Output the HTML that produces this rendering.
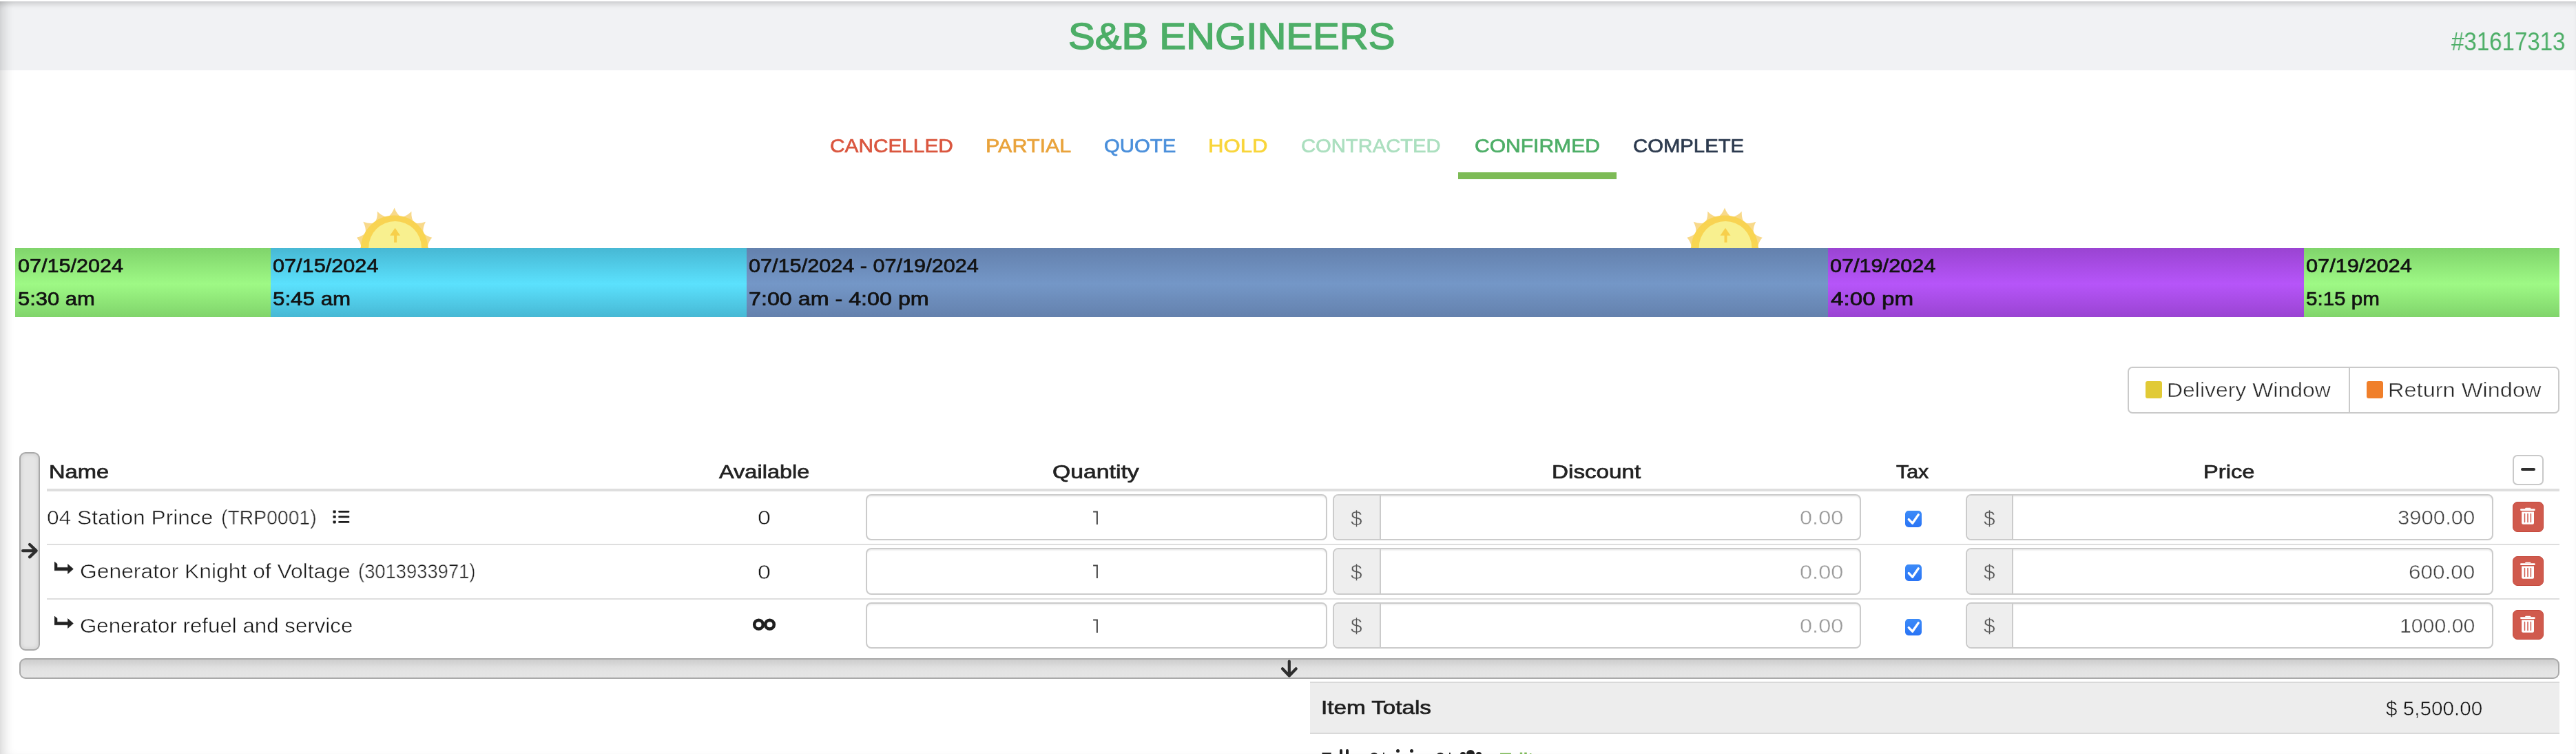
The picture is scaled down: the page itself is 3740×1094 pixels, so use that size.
<!DOCTYPE html>
<html><head><meta charset="utf-8"><title>S&amp;B Engineers</title><style>
*{margin:0;padding:0;box-sizing:border-box}
html,body{width:3740px;height:1094px;overflow:hidden;background:#fff;font-family:"Liberation Sans",sans-serif}
.a{position:absolute}
.t{position:absolute;white-space:pre;line-height:1;transform-origin:0 0;will-change:transform}
.shadowwrap{position:absolute;left:0;top:2px;width:3740px;height:1092px;pointer-events:none;
 box-shadow:inset 0 8px 10px -5px rgba(0,0,0,.19), inset 16px 0 16px -10px rgba(0,0,0,.15);z-index:50}
.hdr{position:absolute;left:0;top:2px;width:3740px;height:100px;background:#f1f2f4}
.seg{position:absolute;top:360px;height:100px}
.inp{position:absolute;border:2px solid #cbcbcb;border-radius:8px;background:#fff;box-shadow:inset 0 2px 2px rgba(0,0,0,.06)}
.grp{position:absolute;border:2px solid #cbcbcb;border-radius:8px;background:#fff;overflow:hidden;box-shadow:inset 0 2px 2px rgba(0,0,0,.06)}
.addon{position:absolute;left:0;top:0;bottom:0;background:#eeeeee;border-right:2px solid #cbcbcb}
.del{position:absolute;left:3648px;width:45px;height:43.5px;background:#d05a4d;border:1px solid #c5483b;border-radius:7px}
.cb{position:absolute;left:2766px;width:24px;height:24px;background:linear-gradient(#3c8bf8,#2a74f5);border-radius:5px}
.rowline{position:absolute;left:68px;width:3648px;height:2px;background:#dedede}
</style></head>
<body>
<div class="hdr"></div>
<div class="a" style="left:2117px;top:250px;width:230px;height:10px;background:#7dbb56"></div>
<svg class="a" style="left:0;top:0" width="3740" height="460"><defs><linearGradient id="sg" x1="0" y1="0" x2="0" y2="1"><stop offset="0" stop-color="#f8d252"/><stop offset="0.5" stop-color="#f9d752"/><stop offset="1" stop-color="#fde54d"/></linearGradient></defs><path d="M562.52,315.06 Q569.01,311.13 572.60,301.50 Q576.19,311.13 582.68,315.06 Q590.21,314.11 597.41,306.77 Q596.78,317.03 601.11,323.26 Q608.37,325.45 617.93,321.68 Q613.18,330.79 614.60,338.25 Q620.35,343.21 627.29,344.73 Q622.57,350.04 620.83,357.43 Q624.07,364.30 629.79,368.51 Q623.32,371.44 618.73,377.49 Q618.89,385.08 622.40,391.25 Q615.30,391.30 608.64,394.95 Q605.70,401.95 606.40,409.02 Q599.89,406.17 592.33,406.81 Q586.80,412.00 584.55,418.74 Q579.77,413.50 572.60,411.00 Q565.43,413.50 560.65,418.74 Q558.40,412.00 552.87,406.81 Q545.31,406.17 538.80,409.02 Q539.50,401.95 536.56,394.95 Q529.90,391.30 522.80,391.25 Q526.31,385.08 526.47,377.49 Q521.88,371.44 515.41,368.51 Q521.13,364.30 524.37,357.43 Q522.63,350.04 517.91,344.73 Q524.85,343.21 530.60,338.25 Q532.02,330.79 527.27,321.68 Q536.83,325.45 544.09,323.26 Q548.42,317.03 547.79,306.77 Q554.99,314.11 562.52,315.06 Z" fill="#f8d98a"/><circle cx="572.6" cy="361.2" r="48.8" fill="url(#sg)"/><circle cx="573.6" cy="359.5" r="38.4" fill="#f8f08f"/><path d="M566.1,341.7 L573.6,330.8 L581.1,341.7 L576.1,341.7 L576.1,351.7 L572.1,351.7 L572.1,341.7 Z" fill="#f7cf4b"/><path d="M2493.92,315.06 Q2500.41,311.13 2504.00,301.50 Q2507.59,311.13 2514.08,315.06 Q2521.61,314.11 2528.81,306.77 Q2528.18,317.03 2532.51,323.26 Q2539.77,325.45 2549.33,321.68 Q2544.58,330.79 2546.00,338.25 Q2551.75,343.21 2558.69,344.73 Q2553.97,350.04 2552.23,357.43 Q2555.47,364.30 2561.19,368.51 Q2554.72,371.44 2550.13,377.49 Q2550.29,385.08 2553.80,391.25 Q2546.70,391.30 2540.04,394.95 Q2537.10,401.95 2537.80,409.02 Q2531.29,406.17 2523.73,406.81 Q2518.20,412.00 2515.95,418.74 Q2511.17,413.50 2504.00,411.00 Q2496.83,413.50 2492.05,418.74 Q2489.80,412.00 2484.27,406.81 Q2476.71,406.17 2470.20,409.02 Q2470.90,401.95 2467.96,394.95 Q2461.30,391.30 2454.20,391.25 Q2457.71,385.08 2457.87,377.49 Q2453.28,371.44 2446.81,368.51 Q2452.53,364.30 2455.77,357.43 Q2454.03,350.04 2449.31,344.73 Q2456.25,343.21 2462.00,338.25 Q2463.42,330.79 2458.67,321.68 Q2468.23,325.45 2475.49,323.26 Q2479.82,317.03 2479.19,306.77 Q2486.39,314.11 2493.92,315.06 Z" fill="#f8d98a"/><circle cx="2504" cy="361.2" r="48.8" fill="url(#sg)"/><circle cx="2505" cy="359.5" r="38.4" fill="#f8f08f"/><path d="M2497.5,341.7 L2505,330.8 L2512.5,341.7 L2507.5,341.7 L2507.5,351.7 L2503.5,351.7 L2503.5,341.7 Z" fill="#f7cf4b"/></svg>
<div class="seg" style="left:22px;width:371px;background:linear-gradient(to bottom,#80d46b 0%,#9ef985 52%,#80d46b 100%)"></div>
<div class="seg" style="left:393px;width:691px;background:linear-gradient(to bottom,#47b8d4 0%,#5be1fd 52%,#47b8d4 100%)"></div>
<div class="seg" style="left:1084px;width:1570px;background:linear-gradient(to bottom,#6481ad 0%,#7497c7 52%,#6481ad 100%)"></div>
<div class="seg" style="left:2654px;width:691px;background:linear-gradient(to bottom,#9a44d2 0%,#b655f9 52%,#9a44d2 100%)"></div>
<div class="seg" style="left:3345px;width:371px;background:linear-gradient(to bottom,#80d46b 0%,#9ef985 52%,#80d46b 100%)"></div>
<div class="a" style="left:3089px;top:532px;width:627px;height:68px;border:2px solid #cacaca;border-radius:7px;background:#fff"></div>
<div class="a" style="left:3410px;top:533px;width:2px;height:66px;background:#cacaca"></div>
<div class="a" style="left:3114.5px;top:553.3px;width:24.5px;height:24.5px;background:#e1ca36;border-radius:3px"></div>
<div class="a" style="left:3435.7px;top:553.3px;width:24.5px;height:24.5px;background:#f07f2a;border-radius:3px"></div>
<div class="a" style="left:28px;top:656px;width:30px;height:288px;background:#e5e5e5;border:2px solid #a9a9a9;border-radius:9px;box-shadow:inset 0 0 6px rgba(0,0,0,.12)"></div>
<div class="a" style="left:28px;top:955px;width:3688px;height:30px;background:linear-gradient(to bottom,#cdcdcd 0%,#d6d6d6 22%,#e0e0e0 45%,#e4e4e4 70%,#e5e5e5 100%);border:2px solid #a9a9a9;border-radius:9px"></div>
<div class="a" style="left:68px;top:709px;width:3648px;height:4px;background:#dedede"></div>
<div class="a" style="left:3648px;top:660px;width:45px;height:44px;border:2px solid #c9c9c9;border-radius:7px;background:#fff"></div>
<div class="a" style="left:3659.5px;top:679px;width:21px;height:4px;background:#2e2e2e;border-radius:2px"></div>
<div class="inp" style="left:1257px;top:717.1px;width:670px;height:67.3px"></div>
<div class="grp" style="left:1935px;top:717.1px;width:767px;height:67.3px"><div class="addon" style="width:68px"></div></div>
<div class="grp" style="left:2854px;top:717.1px;width:766px;height:67.3px"><div class="addon" style="width:67px"></div></div>
<div class="cb" style="top:740.9px"></div>
<svg class="a" style="left:2766px;top:740.9px" width="24" height="24"><path d="M5.3,12.6 L10.6,18.2 L19.2,5.9" stroke="#fff" stroke-width="3.4" fill="none" stroke-linecap="round" stroke-linejoin="round"/></svg>
<div class="del" style="top:728.3px"></div>
<svg class="a" style="left:3648px;top:728.3px" width="45" height="44"><path d="M19.3,8.7 h5.9 a1.2,1.2 0 0 1 1.2,1.2 v0.4 h-8.3 v-0.4 a1.2,1.2 0 0 1 1.2,-1.2z" fill="#fff"/><rect x="11.1" y="10.2" width="21.5" height="2.9" rx="1" fill="#fff"/><path d="M13.1,14.6 h17.9 v16.1 a2,2 0 0 1 -2,2 h-13.9 a2,2 0 0 1 -2,-2z" fill="#fff"/><path d="M17.5,17.6 v11.9 M22,17.6 v11.9 M26.4,17.6 v11.9" stroke="#d05a4d" stroke-width="1.5" stroke-linecap="round"/></svg>
<div class="rowline" style="top:789.3px"></div>
<div class="inp" style="left:1257px;top:795.4px;width:670px;height:67.3px"></div>
<div class="grp" style="left:1935px;top:795.4px;width:767px;height:67.3px"><div class="addon" style="width:68px"></div></div>
<div class="grp" style="left:2854px;top:795.4px;width:766px;height:67.3px"><div class="addon" style="width:67px"></div></div>
<div class="cb" style="top:819.2px"></div>
<svg class="a" style="left:2766px;top:819.2px" width="24" height="24"><path d="M5.3,12.6 L10.6,18.2 L19.2,5.9" stroke="#fff" stroke-width="3.4" fill="none" stroke-linecap="round" stroke-linejoin="round"/></svg>
<div class="del" style="top:806.6px"></div>
<svg class="a" style="left:3648px;top:806.6px" width="45" height="44"><path d="M19.3,8.7 h5.9 a1.2,1.2 0 0 1 1.2,1.2 v0.4 h-8.3 v-0.4 a1.2,1.2 0 0 1 1.2,-1.2z" fill="#fff"/><rect x="11.1" y="10.2" width="21.5" height="2.9" rx="1" fill="#fff"/><path d="M13.1,14.6 h17.9 v16.1 a2,2 0 0 1 -2,2 h-13.9 a2,2 0 0 1 -2,-2z" fill="#fff"/><path d="M17.5,17.6 v11.9 M22,17.6 v11.9 M26.4,17.6 v11.9" stroke="#d05a4d" stroke-width="1.5" stroke-linecap="round"/></svg>
<div class="rowline" style="top:867.6px"></div>
<div class="inp" style="left:1257px;top:873.7px;width:670px;height:67.3px"></div>
<div class="grp" style="left:1935px;top:873.7px;width:767px;height:67.3px"><div class="addon" style="width:68px"></div></div>
<div class="grp" style="left:2854px;top:873.7px;width:766px;height:67.3px"><div class="addon" style="width:67px"></div></div>
<div class="cb" style="top:897.5px"></div>
<svg class="a" style="left:2766px;top:897.5px" width="24" height="24"><path d="M5.3,12.6 L10.6,18.2 L19.2,5.9" stroke="#fff" stroke-width="3.4" fill="none" stroke-linecap="round" stroke-linejoin="round"/></svg>
<div class="del" style="top:884.9px"></div>
<svg class="a" style="left:3648px;top:884.9px" width="45" height="44"><path d="M19.3,8.7 h5.9 a1.2,1.2 0 0 1 1.2,1.2 v0.4 h-8.3 v-0.4 a1.2,1.2 0 0 1 1.2,-1.2z" fill="#fff"/><rect x="11.1" y="10.2" width="21.5" height="2.9" rx="1" fill="#fff"/><path d="M13.1,14.6 h17.9 v16.1 a2,2 0 0 1 -2,2 h-13.9 a2,2 0 0 1 -2,-2z" fill="#fff"/><path d="M17.5,17.6 v11.9 M22,17.6 v11.9 M26.4,17.6 v11.9" stroke="#d05a4d" stroke-width="1.5" stroke-linecap="round"/></svg>
<svg class="a" style="left:483px;top:740px" width="26" height="21"><rect x="0.5" y="0.4" width="4.2" height="4" rx="0.8" fill="#1c1c1c"/><rect x="0.5" y="7.9" width="4.2" height="3.8" rx="0.8" fill="#1c1c1c"/><rect x="0.5" y="15.4" width="4.2" height="4" rx="0.8" fill="#1c1c1c"/><rect x="8.2" y="1.1" width="16.2" height="2.7" rx="1.3" fill="#1c1c1c"/><rect x="8.2" y="8.6" width="16.2" height="2.7" rx="1.3" fill="#1c1c1c"/><rect x="8.2" y="16" width="16.2" height="2.7" rx="1.3" fill="#1c1c1c"/></svg>
<svg class="a" style="left:78.9px;top:815.0px" width="30" height="19"><path d="M0,0 L4,3.2 V8.4 H19.5 V3.6 L27.4,10.6 L19.5,17.5 V12.7 H0 Z" fill="#222" stroke="#222" stroke-width="0.6" stroke-linejoin="round"/></svg>
<svg class="a" style="left:78.9px;top:893.6px" width="30" height="19"><path d="M0,0 L4,3.2 V8.4 H19.5 V3.6 L27.4,10.6 L19.5,17.5 V12.7 H0 Z" fill="#222" stroke="#222" stroke-width="0.6" stroke-linejoin="round"/></svg>
<svg class="a" style="left:1085px;top:890px" width="50" height="35"><circle cx="16.5" cy="16.2" r="6.3" stroke="#1f1f1f" stroke-width="4.6" fill="none"/><circle cx="32.5" cy="16.2" r="6.3" stroke="#1f1f1f" stroke-width="4.6" fill="none"/></svg>
<svg class="a" style="left:20px;top:780px" width="40" height="40"><path d="M13.2,19.1 H32.5 M23.1,10 L32.6,19.1 L23.1,28.2" stroke="#2e2e2e" stroke-width="4.4" fill="none" stroke-linecap="round" stroke-linejoin="round"/></svg>
<svg class="a" style="left:1850px;top:950px" width="40" height="40"><path d="M21.8,9.5 V30 M12,20.2 L21.8,30.5 L31.7,20.2" stroke="#2e2e2e" stroke-width="4.2" fill="none" stroke-linecap="round" stroke-linejoin="round"/></svg>
<svg class="a" style="left:1580px;top:735.0px" width="20" height="30"><path d="M7.1,6.4 H13.9 V25.9 H11.8 V8.5 H7.1 Z" fill="#4a4a4a"/></svg>
<svg class="a" style="left:1580px;top:813.3px" width="20" height="30"><path d="M7.1,6.4 H13.9 V25.9 H11.8 V8.5 H7.1 Z" fill="#4a4a4a"/></svg>
<svg class="a" style="left:1580px;top:891.6px" width="20" height="30"><path d="M7.1,6.4 H13.9 V25.9 H11.8 V8.5 H7.1 Z" fill="#4a4a4a"/></svg>
<div class="a" style="left:1902px;top:989px;width:1814px;height:76px;background:#ededed;border-top:2px solid #d9d9d9;border-bottom:2px solid #d9d9d9"></div>
<div class="a" style="left:1945px;top:1087px;width:4px;height:10px;background:#222;border-radius:2px"></div>
<div class="a" style="left:1954px;top:1087px;width:4px;height:10px;background:#222;border-radius:2px"></div>
<div class="a" style="left:2027px;top:1087px;width:5px;height:5px;background:#222;border-radius:50%"></div>
<div class="a" style="left:2047px;top:1087px;width:5px;height:5px;background:#222;border-radius:50%"></div>
<div class="a" style="left:2120px;top:1091px;width:8px;height:8px;background:#222;border-radius:50%"></div>
<div class="a" style="left:2129px;top:1088px;width:12px;height:12px;background:#222;border-radius:50%"></div>
<div class="a" style="left:2143px;top:1091px;width:8px;height:8px;background:#222;border-radius:50%"></div>
<div class="t" style="left:1550.87px;top:25.80px;font-size:54.5px;color:#4dae67;-webkit-text-stroke:1.5px #4dae67;transform:scaleX(1.0658);">S&amp;B ENGINEERS</div>
<div class="t" style="left:3558.90px;top:41.50px;font-size:37px;color:#4dae67;transform:scaleX(0.8935);">#31617313</div>
<div class="t" style="left:1204.74px;top:198.20px;font-size:28px;color:#da563f;-webkit-text-stroke:0.7px #da563f;transform:scaleX(1.0639);">CANCELLED</div>
<div class="t" style="left:1430.82px;top:198.20px;font-size:28px;color:#e9a33b;-webkit-text-stroke:0.7px #e9a33b;transform:scaleX(1.0893);">PARTIAL</div>
<div class="t" style="left:1602.95px;top:198.20px;font-size:28px;color:#4a8fdb;-webkit-text-stroke:0.7px #4a8fdb;transform:scaleX(1.0469);">QUOTE</div>
<div class="t" style="left:1754.38px;top:198.20px;font-size:28px;color:#f9d53a;-webkit-text-stroke:0.7px #f9d53a;transform:scaleX(1.1120);">HOLD</div>
<div class="t" style="left:1889.36px;top:198.20px;font-size:28px;color:#abdfbf;-webkit-text-stroke:0.7px #abdfbf;transform:scaleX(1.0420);">CONTRACTED</div>
<div class="t" style="left:2140.73px;top:198.20px;font-size:28px;color:#4dae67;-webkit-text-stroke:0.7px #4dae67;transform:scaleX(1.0726);">CONFIRMED</div>
<div class="t" style="left:2370.95px;top:198.20px;font-size:28px;color:#2c3a4e;-webkit-text-stroke:0.7px #2c3a4e;transform:scaleX(1.0461);">COMPLETE</div>
<div class="t" style="left:25.81px;top:372.20px;font-size:28px;color:#121212;-webkit-text-stroke:0.7px #121212;transform:scaleX(1.0921);">07/15/2024</div>
<div class="t" style="left:25.79px;top:420.30px;font-size:28px;color:#121212;-webkit-text-stroke:0.7px #121212;transform:scaleX(1.1051);">5:30 am</div>
<div class="t" style="left:396.21px;top:372.20px;font-size:28px;color:#121212;-webkit-text-stroke:0.7px #121212;transform:scaleX(1.0950);">07/15/2024</div>
<div class="t" style="left:396.18px;top:420.30px;font-size:28px;color:#121212;-webkit-text-stroke:0.7px #121212;transform:scaleX(1.1182);">5:45 am</div>
<div class="t" style="left:1087.21px;top:372.20px;font-size:28px;color:#121212;-webkit-text-stroke:0.7px #121212;transform:scaleX(1.0938);">07/15/2024 - 07/19/2024</div>
<div class="t" style="left:1087.15px;top:420.30px;font-size:28px;color:#121212;-webkit-text-stroke:0.7px #121212;transform:scaleX(1.1516);">7:00 am - 4:00 pm</div>
<div class="t" style="left:2656.91px;top:372.20px;font-size:28px;color:#121212;-webkit-text-stroke:0.7px #121212;transform:scaleX(1.0935);">07/19/2024</div>
<div class="t" style="left:2658.00px;top:420.30px;font-size:28px;color:#121212;-webkit-text-stroke:0.7px #121212;transform:scaleX(1.1870);">4:00 pm</div>
<div class="t" style="left:3347.90px;top:372.20px;font-size:28px;color:#121212;-webkit-text-stroke:0.7px #121212;transform:scaleX(1.0971);">07/19/2024</div>
<div class="t" style="left:3347.94px;top:420.30px;font-size:28px;color:#121212;-webkit-text-stroke:0.7px #121212;transform:scaleX(1.0556);">5:15 pm</div>
<div class="t" style="left:3146.20px;top:552.30px;font-size:29px;color:#282828;-webkit-text-stroke:0.5px #fff;transform:scaleX(1.1009);">Delivery Window</div>
<div class="t" style="left:3466.76px;top:552.30px;font-size:29px;color:#282828;-webkit-text-stroke:0.5px #fff;transform:scaleX(1.1224);">Return Window</div>
<div class="t" style="left:71.17px;top:671.00px;font-size:28px;color:#222;-webkit-text-stroke:0.7px #222;transform:scaleX(1.1667);">Name</div>
<div class="t" style="left:1044.30px;top:671.00px;font-size:28px;color:#222;-webkit-text-stroke:0.7px #222;transform:scaleX(1.1616);">Available</div>
<div class="t" style="left:1528.29px;top:671.00px;font-size:28px;color:#222;-webkit-text-stroke:0.7px #222;transform:scaleX(1.2058);">Quantity</div>
<div class="t" style="left:2252.93px;top:671.00px;font-size:28px;color:#222;-webkit-text-stroke:0.7px #222;transform:scaleX(1.1869);">Discount</div>
<div class="t" style="left:2753.40px;top:671.00px;font-size:28px;color:#222;-webkit-text-stroke:0.7px #222;transform:scaleX(1.0841);">Tax</div>
<div class="t" style="left:3199.17px;top:671.00px;font-size:28px;color:#222;-webkit-text-stroke:0.7px #222;transform:scaleX(1.1672);">Price</div>
<div class="t" style="left:67.81px;top:737.00px;font-size:29px;color:#1c1c1c;-webkit-text-stroke:0.5px #fff;transform:scaleX(1.0927);">04 Station Prince</div>
<div class="t" style="left:320.55px;top:737.00px;font-size:29px;color:#1c1c1c;-webkit-text-stroke:0.5px #fff;transform:scaleX(0.9768);">(TRP0001)</div>
<div class="t" style="left:115.50px;top:815.40px;font-size:29px;color:#1c1c1c;-webkit-text-stroke:0.5px #fff;transform:scaleX(1.0972);">Generator Knight of Voltage</div>
<div class="t" style="left:519.71px;top:815.40px;font-size:29px;color:#1c1c1c;-webkit-text-stroke:0.5px #fff;transform:scaleX(0.9435);">(3013933971)</div>
<div class="t" style="left:115.52px;top:893.60px;font-size:29px;color:#141414;-webkit-text-stroke:0.5px #fff;transform:scaleX(1.0784);">Generator refuel and service</div>
<div class="t" style="left:1099.83px;top:737.30px;font-size:29px;color:#181818;-webkit-text-stroke:0.5px #fff;transform:scaleX(1.1714);">0</div>
<div class="t" style="left:1961.00px;top:736.50px;font-size:30px;color:#555;-webkit-text-stroke:0.5px #eee;">$</div>
<div class="t" style="left:2880.00px;top:736.50px;font-size:30px;color:#555;-webkit-text-stroke:0.5px #eee;">$</div>
<div class="t" style="left:2612.88px;top:737.30px;font-size:29px;color:#9a9a9a;-webkit-text-stroke:0.4px #fff;transform:scaleX(1.1222);">0.00</div>
<div class="t" style="left:1099.83px;top:815.60px;font-size:29px;color:#181818;-webkit-text-stroke:0.5px #fff;transform:scaleX(1.1714);">0</div>
<div class="t" style="left:1961.00px;top:814.80px;font-size:30px;color:#555;-webkit-text-stroke:0.5px #eee;">$</div>
<div class="t" style="left:2880.00px;top:814.80px;font-size:30px;color:#555;-webkit-text-stroke:0.5px #eee;">$</div>
<div class="t" style="left:2612.88px;top:815.60px;font-size:29px;color:#9a9a9a;-webkit-text-stroke:0.4px #fff;transform:scaleX(1.1222);">0.00</div>
<div class="t" style="left:1961.00px;top:893.10px;font-size:30px;color:#555;-webkit-text-stroke:0.5px #eee;">$</div>
<div class="t" style="left:2880.00px;top:893.10px;font-size:30px;color:#555;-webkit-text-stroke:0.5px #eee;">$</div>
<div class="t" style="left:2612.88px;top:893.90px;font-size:29px;color:#9a9a9a;-webkit-text-stroke:0.4px #fff;transform:scaleX(1.1222);">0.00</div>
<div class="t" style="left:3481.23px;top:737.20px;font-size:29px;color:#404040;-webkit-text-stroke:0.5px #fff;transform:scaleX(1.0718);">3900.00</div>
<div class="t" style="left:3497.32px;top:815.50px;font-size:29px;color:#404040;-webkit-text-stroke:0.5px #fff;transform:scaleX(1.0839);">600.00</div>
<div class="t" style="left:3484.32px;top:893.80px;font-size:29px;color:#404040;-webkit-text-stroke:0.5px #fff;transform:scaleX(1.0422);">1000.00</div>
<div class="t" style="left:1917.93px;top:1013.20px;font-size:28px;color:#1e1e1e;-webkit-text-stroke:0.7px #1e1e1e;transform:scaleX(1.1856);">Item Totals</div>
<div class="t" style="left:3464.00px;top:1013.60px;font-size:29px;color:#111;-webkit-text-stroke:0.5px #ededed;transform:scaleX(1.0235);">$ 5,500.00</div>
<div class="t" style="left:1917.70px;top:1087.80px;font-size:29px;color:#222;">7</div>
<div class="t" style="left:1987.00px;top:1088.00px;font-size:29px;color:#222;">0*</div>
<div class="t" style="left:2083.00px;top:1088.00px;font-size:29px;color:#222;">0*</div>
<div class="t" style="left:2175.91px;top:1088.50px;font-size:28px;color:#7dbb56;-webkit-text-stroke:0.7px #7dbb56;transform:scaleX(1.0426);">Edit</div>
<div class="shadowwrap"></div>
</body></html>
